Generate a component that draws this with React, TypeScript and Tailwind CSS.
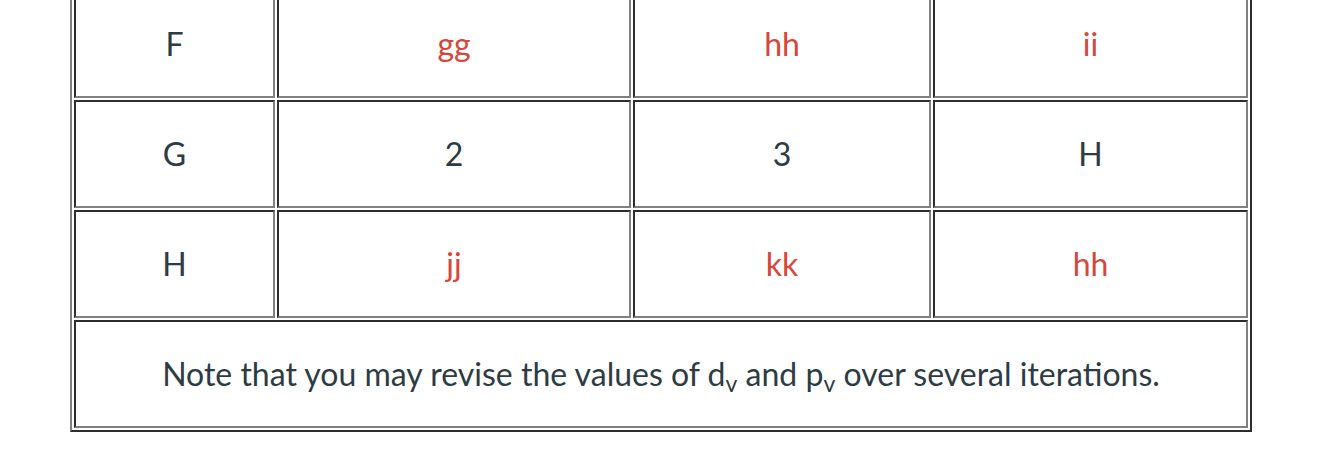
const rows: { label: string; cells: { text: string; red?: boolean }[] }[] = [
  { label: 'F', cells: [{ text: 'gg', red: true }, { text: 'hh', red: true }, { text: 'ii', red: true }] },
  { label: 'G', cells: [{ text: '2' }, { text: '3' }, { text: 'H' }] },
  { label: 'H', cells: [{ text: 'jj', red: true }, { text: 'kk', red: true }, { text: 'hh', red: true }] },
];

const widths = ['w-[201px]', 'w-[354px]', 'w-[298px]', 'w-[315px]'];

const cellBorder =
  'border-2 border-solid border-t-[#2d2d2d] border-l-[#2d2d2d] border-r-[#808080] border-b-[#808080] p-0 text-center align-middle';

export default function App() {
  return (
    <div className="h-[476px] w-[1338px] overflow-hidden bg-white font-['Lato','Noto_Sans',sans-serif] text-[#2d3b45]">
      <table className="-mt-[14px] ml-[70px] w-[1182px] table-fixed border-separate border-spacing-[2px] border-2 border-solid border-t-[#808080] border-l-[#808080] border-r-[#2d2d2d] border-b-[#2d2d2d] text-[32px] leading-none">
        <tbody>
          {rows.map((row, i) => (
            <tr key={i} className="h-[108px]">
              <td className={`${cellBorder} ${widths[0]}`}>{row.label}</td>
              {row.cells.map((c, j) => (
                <td
                  key={j}
                  className={`${cellBorder} ${widths[j + 1]} ${c.red ? 'text-[#d4473a]' : ''}`}
                >
                  {c.text}
                </td>
              ))}
            </tr>
          ))}
          <tr className="h-[108px]">
            <td colSpan={4} className={cellBorder}>
              Note that you may revise the values of d<sub className="text-[23px]">v</sub> and p
              <sub className="text-[23px]">v</sub> over several iterations.
            </td>
          </tr>
        </tbody>
      </table>
    </div>
  );
}
